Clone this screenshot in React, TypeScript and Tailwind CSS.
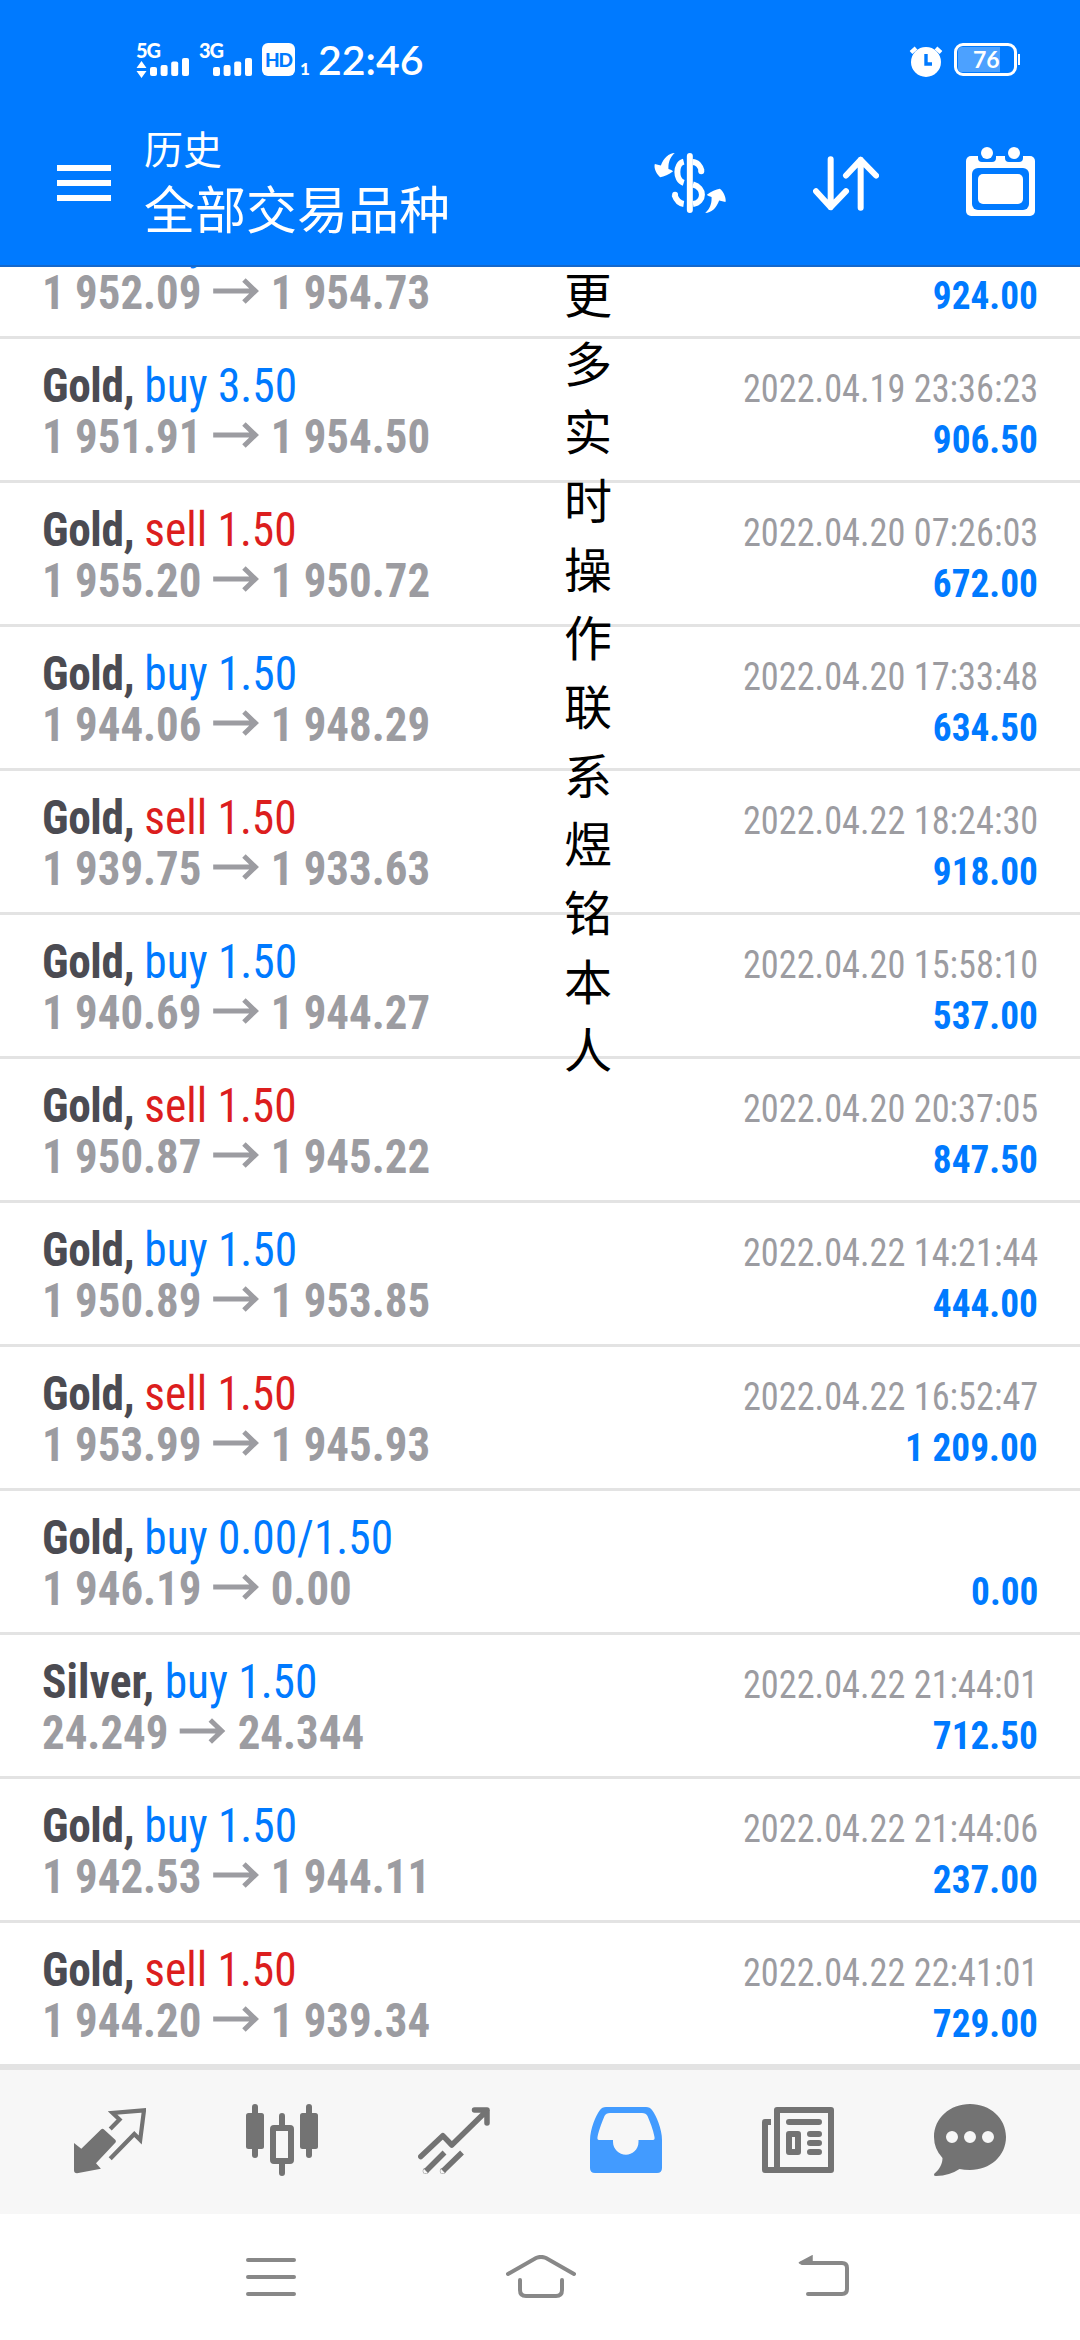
import React from 'react'

interface Deal {
  symbol: string
  side: 'buy' | 'sell'
  volume: string
  open: string
  close: string
  time?: string
  profit: string
}

const deals: Deal[] = [
  { symbol: 'Gold', side: 'buy', volume: '3.50', open: '1 952.09', close: '1 954.73', profit: '924.00' },
  { symbol: 'Gold', side: 'buy', volume: '3.50', open: '1 951.91', close: '1 954.50', time: '2022.04.19 23:36:23', profit: '906.50' },
  { symbol: 'Gold', side: 'sell', volume: '1.50', open: '1 955.20', close: '1 950.72', time: '2022.04.20 07:26:03', profit: '672.00' },
  { symbol: 'Gold', side: 'buy', volume: '1.50', open: '1 944.06', close: '1 948.29', time: '2022.04.20 17:33:48', profit: '634.50' },
  { symbol: 'Gold', side: 'sell', volume: '1.50', open: '1 939.75', close: '1 933.63', time: '2022.04.22 18:24:30', profit: '918.00' },
  { symbol: 'Gold', side: 'buy', volume: '1.50', open: '1 940.69', close: '1 944.27', time: '2022.04.20 15:58:10', profit: '537.00' },
  { symbol: 'Gold', side: 'sell', volume: '1.50', open: '1 950.87', close: '1 945.22', time: '2022.04.20 20:37:05', profit: '847.50' },
  { symbol: 'Gold', side: 'buy', volume: '1.50', open: '1 950.89', close: '1 953.85', time: '2022.04.22 14:21:44', profit: '444.00' },
  { symbol: 'Gold', side: 'sell', volume: '1.50', open: '1 953.99', close: '1 945.93', time: '2022.04.22 16:52:47', profit: '1 209.00' },
  { symbol: 'Gold', side: 'buy', volume: '0.00/1.50', open: '1 946.19', close: '0.00', profit: '0.00' },
  { symbol: 'Silver', side: 'buy', volume: '1.50', open: '24.249', close: '24.344', time: '2022.04.22 21:44:01', profit: '712.50' },
  { symbol: 'Gold', side: 'buy', volume: '1.50', open: '1 942.53', close: '1 944.11', time: '2022.04.22 21:44:06', profit: '237.00' },
  { symbol: 'Gold', side: 'sell', volume: '1.50', open: '1 944.20', close: '1 939.34', time: '2022.04.22 22:41:01', profit: '729.00' },
]

const notice = '更多实时操作联系煜铭本人'

function SignalBars() {
  return (
    <svg width="39" height="18" viewBox="0 0 39 18" fill="currentColor">
      <rect x="0" y="9" width="7" height="9" rx="2" />
      <rect x="10.6" y="7" width="7" height="11" rx="2" />
      <rect x="21.2" y="3.5" width="7" height="14.5" rx="2" />
      <rect x="32" y="0" width="7" height="18" rx="2" />
    </svg>
  )
}

function StatusBar() {
  return (
    <div className="flex h-[120px] items-start pt-[42px] text-white font-['Lato',sans-serif]">
      <div className="ml-[136px] flex w-[53px] flex-col">
        <span className="h-4 text-[20px] leading-4 font-black tracking-[-1px]">5G</span>
        <div className="flex items-start justify-between">
          <svg className="mt-[3px]" width="11" height="17" viewBox="0 0 11 17" fill="currentColor">
            <path d="M5.5 0 10.5 7H.5ZM5.5 17 .5 10H10.5Z" />
          </svg>
          <SignalBars />
        </div>
      </div>
      <div className="ml-[10px] flex w-[53px] flex-col">
        <span className="h-4 text-[20px] leading-4 font-black tracking-[-1px]">3G</span>
        <div className="flex justify-end">
          <SignalBars />
        </div>
      </div>
      <div className="mt-px ml-[10px] flex h-[33px] w-[33px] items-center justify-center rounded-[6px] bg-white text-[19px] leading-none font-black tracking-[-1px] text-[#007aff]">
        HD
      </div>
      <span className="mt-[19px] ml-[5px] w-[9px] text-[17px] leading-4 font-black">1</span>
      <span className="ml-[9px] text-[41px] leading-[36px] font-semibold">22:46</span>
      <svg className="mt-[3px] ml-auto" width="34" height="33" viewBox="0 0 34 33">
        <circle cx="17" cy="17" r="15" fill="#fff" />
        <path d="M2 7.5 7 3M32 7.5 27 3" stroke="#fff" strokeWidth="4" />
        <path d="M17 9V19H23" fill="none" stroke="#007aff" strokeWidth="3.4" />
      </svg>
      <div className="mt-px ml-[11px] flex h-[33px] w-[63px] items-center rounded-[9px] border-[3px] border-white p-px">
        <div className="h-full w-[42px] rounded-l-[4px] bg-[#4ca1ff] pl-[15px] text-[23px] leading-[25px] font-bold">76</div>
      </div>
      <div className="mt-[12px] mr-[60px] ml-px h-[11px] w-[2px] bg-white" />
    </div>
  )
}

function AppBar() {
  return (
    <div className="flex h-[145px] items-start text-white">
      <svg className="mt-[45px] ml-[57px]" width="54" height="36" viewBox="0 0 54 36" fill="currentColor">
        <path d="M0 0H54V6H0ZM0 15H54V21H0ZM0 30H54V36H0Z" />
      </svg>
      <div className="ml-[33px] flex flex-col font-['Noto_Sans_CJK_SC',sans-serif]">
        <span className="mt-[2px] text-[39px] leading-[50px]">历史</span>
        <span className="mt-[5px] text-[51px] leading-[60px]">全部交易品种</span>
      </div>
      <svg className="mt-[33px] ml-auto" width="72" height="60" viewBox="102 98 216 181">
        <path d="M164 98C146 99 131 112 122 136L104 131C100 142 108 162 120 171C131 169 147 163 159 153C157 150 151 148 145 146C144 128 149 112 164 98Z" fill="#fff" />
        <path d="M256 279C274 278 289 265 298 241L317 246C320 235 312 215 300 206C289 208 273 214 261 224C263 227 269 229 275 231C276 249 271 265 256 279Z" fill="#fff" />
        <path d="M191 124C166 130 165 180 191 188M218 125C232 125 242 138 245 152M163 224C168 238 178 250 191 252M219 193C255 202 255 246 219 252" fill="none" stroke="#fff" strokeWidth="18" />
        <circle cx="244" cy="153" r="9" fill="#fff" />
        <circle cx="165" cy="224" r="9" fill="#fff" />
        <path d="M209.500 107V270" stroke="#fff" strokeWidth="18" strokeLinecap="round" />
      </svg>
      <svg className="mt-[36px] ml-[87px]" width="66" height="55" viewBox="579 107 198 164">
        <path d="M632 116V260M588 212 632 260 678 212M722 262V118M678 165 722 118 768 165" fill="none" stroke="#fff" strokeWidth="18" strokeLinecap="round" strokeLinejoin="round" />
      </svg>
      <svg className="mt-[27px] mr-[45px] ml-[87px]" width="69" height="69" viewBox="0 0 69 69">
        <rect y="9" width="69" height="60" rx="5" fill="#fff" />
        <path d="M12 9H30V11Q30 15 26 15H16Q12 15 12 11ZM39 9H57V11Q57 15 53 15H43Q39 15 39 11Z" fill="#007aff" />
        <circle cx="21" cy="6" r="6" fill="#fff" />
        <circle cx="48" cy="6" r="6" fill="#fff" />
        <rect x="6" y="21" width="57" height="42" rx="6" fill="#007aff" />
        <rect x="12" y="27" width="45" height="30" rx="5" fill="#fff" />
      </svg>
    </div>
  )
}

function DealRow({ deal }: { deal: Deal }) {
  return (
    <div className="h-36 shrink-0 border-b-[3px] border-[#e3e3e3] px-[42px] pt-[21px]">
      <div className="flex h-[51px] items-baseline justify-between leading-[51px]">
        <div className="origin-left scale-x-[0.945] text-[48px] whitespace-pre">
          <span className={`font-bold text-[#4b4b52] ${deal.symbol === 'Silver' ? 'tracking-[0.100px]' : 'tracking-[-0.400px]'}`}>
            {deal.symbol},{' '}
          </span>
          <span className={deal.side === 'buy' ? 'text-[#007aff]' : 'text-[#dc1e1e]'}>
            {deal.side} {deal.volume}
          </span>
        </div>
        <span className="origin-right scale-x-[0.931] text-[39px] text-[#9c9ca1]">{deal.time}</span>
      </div>
      <div className="flex h-[51px] items-baseline justify-between leading-[51px] font-bold">
        <div className="flex origin-left scale-x-[0.935] items-baseline text-[48px] text-[#9c9ca1]">
          <span>{deal.open}</span>
          <svg className="mt-[11px] mr-3 ml-[12px] self-start" width="50" height="26" viewBox="0 0 47 26" preserveAspectRatio="none" fill="none" stroke="currentColor" strokeWidth="5">
            <path d="M0 13H43M31 2 42.500 13 31 24" />
          </svg>
          <span>{deal.close}</span>
        </div>
        <span className="origin-right scale-x-[0.956] text-[39px] text-[#007aff]">{deal.profit}</span>
      </div>
    </div>
  )
}

function TabBar() {
  return (
    <div className="grid h-[147px] grid-cols-6 items-center justify-items-center border-t-[3px] border-[#e3e3e3] bg-[#f7f7f7] px-6 pb-1 text-[#737373]">
      <svg width="72" height="67" viewBox="0 0 72 67">
        <path d="M0 36 7.300 41.700 27 22.500Q28.600 21 30 22.500L41.500 33Q42.400 34.300 41.500 35.500L22 56.300 26.900 61.700 3 66.300Q0 66.300 0 63.300Z" fill="currentColor" />
        <path d="M36.200 22 45.500 12.500 38.600 6 70 3.300 66.200 33 60.300 27 36.200 51.700" fill="none" stroke="currentColor" strokeWidth="4.200" />
      </svg>
      <svg width="72" height="72" viewBox="0 0 72 72" fill="currentColor">
        <rect y="9" width="18" height="36" rx="2.500" />
        <rect x="6" width="6" height="54" rx="3" />
        <rect x="54" y="9" width="18" height="36" rx="2.500" />
        <rect x="60" width="6" height="54" rx="3" />
        <rect x="27" y="24" width="18" height="33" rx="1" fill="none" stroke="currentColor" strokeWidth="6" />
        <path d="M33 22V12a3 3 0 0 1 6 0V22ZM33 59V69a3 3 0 0 0 6 0V59Z" />
      </svg>
      <svg width="72" height="67" viewBox="0 0 72 67" fill="none" stroke="currentColor" strokeWidth="5.500" strokeLinejoin="round">
        <path d="M2.800 49.500 24.800 28.700 33.800 38 69 3.500M56.500 3H69V16" strokeLinecap="round" />
        <path d="M8 64 26.500 45.500M25 64 44 45.500" />
        <circle cx="7.700" cy="64" r="0.200" />
        <circle cx="24.800" cy="64" r="0.200" />
      </svg>
      <svg width="72" height="66" viewBox="0 0 72 66" fill="#429bff" fillRule="evenodd">
        <path d="M0 33C0 22 6 8 10 3Q12 0 16 0H56Q60 0 62 3C66 8 72 22 72 33V61Q72 66 67 66H5Q0 66 0 61ZM9 33H23V35C23 42 29 47.700 36 47.700C42 47.700 48.500 43 48.500 35V33H63Q65 33 64.500 30C63 22 60 15 57.500 9Q56 6 52 6H20Q16 6 14.500 9C13 13 9 22 7.500 30Q7 33 9 33Z" />
      </svg>
      <svg width="72" height="66" viewBox="0 0 72 66" fill="none" stroke="currentColor" strokeWidth="6">
        <rect x="15" y="3" width="54" height="60" strokeLinejoin="round" />
        <path d="M9 15H3V63H15" strokeLinejoin="round" />
        <rect x="27" y="27" width="9" height="18" strokeLinejoin="round" />
        <path d="M27 15H57M48 27H57M48 36H57M48 45H57" strokeLinecap="round" />
      </svg>
      <svg width="72" height="72" viewBox="0 0 72 72" fill="currentColor" fillRule="evenodd">
        <path d="M36 0C56 0 72 14 72 33S56 66 36 66Q30 66 25.500 65Q16 71.500 2 72Q-1 72 0.500 69.500C6 65 8.500 59 8.500 54Q0 45 0 33C0 14 16 0 36 0ZM12 33a6 6 0 1 0 12 0a6 6 0 1 0-12 0M30 33a6 6 0 1 0 12 0a6 6 0 1 0-12 0M48 33a6 6 0 1 0 12 0a6 6 0 1 0-12 0" />
      </svg>
    </div>
  )
}

function SystemNav() {
  return (
    <div className="flex h-[126px] items-start bg-white pt-[41px] text-[#888]">
      <svg className="ml-[246px]" width="50" height="44" viewBox="0 0 50 44" stroke="currentColor" strokeWidth="4" strokeLinecap="round">
        <path d="M2 5H48M2 22H48M2 39H48" />
      </svg>
      <svg className="ml-[210px]" width="70" height="44" viewBox="0 0 70 44" fill="none" stroke="currentColor" strokeWidth="4" strokeLinecap="round">
        <path d="M2 19 30 3Q35 .8 40 3L68 19M14 25V35Q14 41 20 41H50Q56 41 56 35V25" />
      </svg>
      <svg className="ml-[222px]" width="51" height="44" viewBox="0 0 51 44" fill="none" stroke="currentColor" strokeWidth="4" strokeLinecap="round">
        <path d="M4 8H44Q49 8 49 13V34Q49 39 44 39H10" />
        <path d="M1 8 14 1V8Z" fill="currentColor" strokeWidth="1.500" />
      </svg>
    </div>
  )
}

export default function App() {
  return (
    <div className="flex h-[2340px] w-[1080px] flex-col overflow-hidden bg-white">
      <header className="h-[267px] shrink-0 border-b-2 border-[#1468cc] bg-[#007aff]">
        <StatusBar />
        <AppBar />
      </header>
      <main className="relative flex h-[1800px] shrink-0 flex-col justify-end overflow-hidden font-['Roboto_Condensed','Roboto',sans-serif] [font-stretch:75%]">
        {deals.map((deal, i) => (
          <DealRow key={i} deal={deal} />
        ))}
        <div className="absolute top-[-9px] left-[564px] flex w-12 flex-col font-['Noto_Sans_CJK_SC',sans-serif] text-[48px] leading-[68.650px] text-black">
          {notice.split('').map((char) => (
            <span key={char}>{char}</span>
          ))}
        </div>
      </main>
      <TabBar />
      <SystemNav />
    </div>
  )
}
